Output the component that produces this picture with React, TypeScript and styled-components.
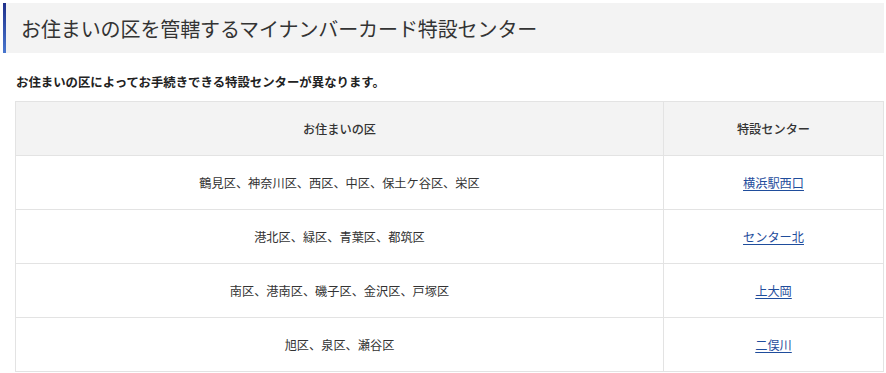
import React from "react";
import styled, { createGlobalStyle } from "styled-components";

const GlobalStyle = createGlobalStyle`
  body {
    margin: 0;
    background: #ffffff;
    color: #333333;
    font-family: "Noto Sans CJK JP", "Noto Sans", sans-serif;
  }
`;

const Page = styled.div`
  padding: 3px 2px 0 3px;
`;

const Heading = styled.h2`
  margin: 0;
  height: 50px;
  display: flex;
  align-items: center;
  padding-left: 15px;
  background: #f3f3f3;
  border-left: 3px solid #2f4fa8;
  border-image: linear-gradient(to bottom, #1e2f8a, #4a78d0) 1;
  font-size: 20px;
  font-weight: 400;
  color: #333333;
  letter-spacing: -0.1px;
`;

const Lead = styled.p`
  margin: 20px 0 0 13px;
  font-size: 12.4px;
  font-weight: 700;
  line-height: 18px;
  color: #222222;
`;

const Table = styled.table`
  margin: 10px 0 0 12px;
  width: 869px;
  border-collapse: collapse;
  font-size: 12.2px;
  color: #333333;
`;

const HeadCell = styled.th<{ $w?: string }>`
  width: ${(p) => p.$w ?? "auto"};
  height: 53px;
  background: #f3f3f3;
  border: 1px solid #e3e3e3;
  font-weight: 500;
  text-align: center;
  padding: 0;
`;

const Cell = styled.td`
  height: 53px;
  border: 1px solid #e3e3e3;
  text-align: center;
  padding: 0;
`;

const CenterLink = styled.a`
  color: #1f4d9c;
  text-decoration: underline;
  text-underline-offset: 2px;
`;

const rows = [
  { wards: "鶴見区、神奈川区、西区、中区、保土ケ谷区、栄区", center: "横浜駅西口" },
  { wards: "港北区、緑区、青葉区、都筑区", center: "センター北" },
  { wards: "南区、港南区、磯子区、金沢区、戸塚区", center: "上大岡" },
  { wards: "旭区、泉区、瀬谷区", center: "二俣川" },
];

export default function App() {
  return (
    <Page>
      <GlobalStyle />
      <Heading>お住まいの区を管轄するマイナンバーカード特設センター</Heading>
      <Lead>お住まいの区によってお手続きできる特設センターが異なります。</Lead>
      <Table>
        <thead>
          <tr>
            <HeadCell $w="647px">お住まいの区</HeadCell>
            <HeadCell>特設センター</HeadCell>
          </tr>
        </thead>
        <tbody>
          {rows.map((r) => (
            <tr key={r.center}>
              <Cell>{r.wards}</Cell>
              <Cell>
                <CenterLink href="#">{r.center}</CenterLink>
              </Cell>
            </tr>
          ))}
        </tbody>
      </Table>
    </Page>
  );
}
